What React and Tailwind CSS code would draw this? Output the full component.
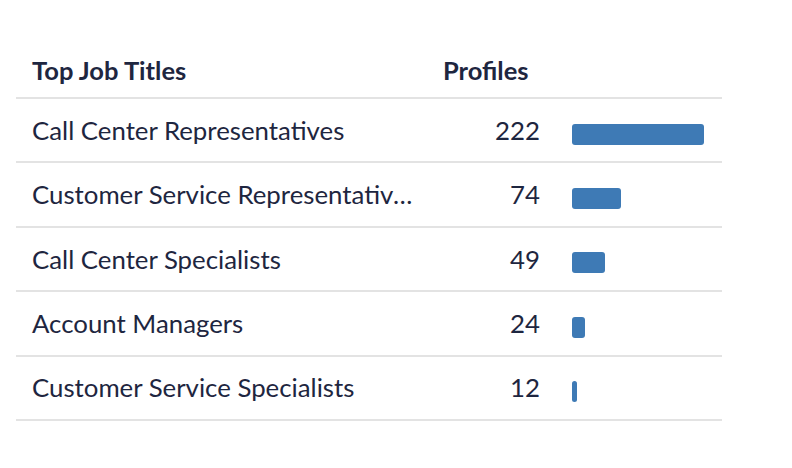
import React from 'react'

const rows = [
    { title: 'Call Center Representatives', count: 222, bar: 'w-[132px]' },
    { title: 'Customer Service Representatives', count: 74, bar: 'w-[49px]' },
    { title: 'Call Center Specialists', count: 49, bar: 'w-[33px]' },
    { title: 'Account Managers', count: 24, bar: 'w-[13px]' },
    { title: 'Customer Service Specialists', count: 12, bar: 'w-[5px]' },
]

const App = () => {
    return (
        <div className='bg-white w-[792px] h-[468px] pt-[46px] pl-4 font-["Lato",sans-serif] text-[#1e2640]'>
            <div className='w-[706px]'>
                <div className='grid grid-cols-[411px_129px_166px] h-[53px] items-center border-b-2 border-[#e3e3e3] text-[25.5px] font-bold'>
                    <div className='px-4 -mt-[2px]'>Top Job Titles</div>
                    <div className='px-4 -mt-[2px]'>Profiles</div>
                    <div></div>
                </div>
                {rows.map((row) => (
                    <div key={row.title} className='grid grid-cols-[411px_129px_166px] h-[64.4px] items-center border-b-2 border-[#e3e3e3] text-[25.8px]'>
                        <div className='pl-4 pr-[11px] truncate'>{row.title}</div>
                        <div className='px-4 text-right'>{row.count}</div>
                        <div className='px-4 pt-[8px]'>
                            <div className={`${row.bar} h-[21px] rounded-[3px] bg-[#3e7ab5]`}></div>
                        </div>
                    </div>
                ))}
            </div>
        </div>
    )
}

export default App
